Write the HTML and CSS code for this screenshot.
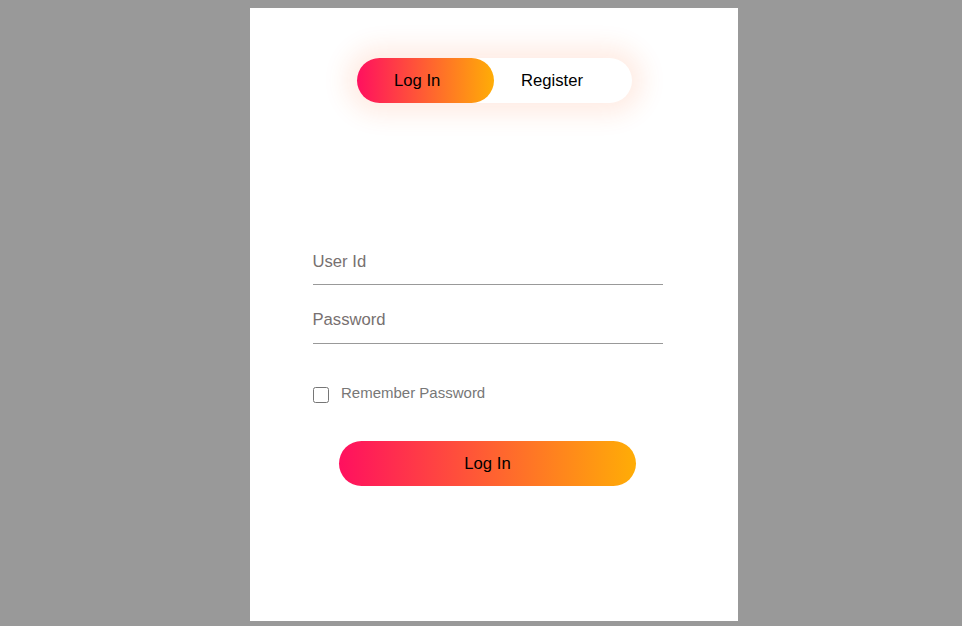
FILE: index.html
```html
<!DOCTYPE html>
<html>
<head>
<meta charset="utf-8">
<link rel="stylesheet" href="styles.css">
</head>
<body>
<div class="card">
  <div class="button-box">
    <button class="toggle-btn active" type="button">Log In</button>
    <button class="toggle-btn" type="button">Register</button>
  </div>
  <form class="input-group">
    <input class="input-field" type="text" placeholder="User Id">
    <input class="input-field" type="password" placeholder="Password">
    <label class="remember">
      <input class="check-box" type="checkbox">
      <span>Remember Password</span>
    </label>
    <button class="submit-btn" type="button">Log In</button>
  </form>
</div>
</body>
</html>
```

FILE: styles.css
```css
html, body {
  background: #999999;
}
body {
  margin: 8px;
  font-family: "Liberation Sans", Arial, sans-serif;
}
.card {
  box-sizing: border-box;
  width: 488px;
  height: 613px;
  margin-left: 242px;
  padding-top: 6.25px;
  background: #ffffff;
  overflow: hidden;
}
.button-box {
  display: flex;
  width: 275px;
  height: 45px;
  margin: 43.75px auto 0;
  border-radius: 37.5px;
  box-shadow: 0 0 25px 11.25px rgba(255, 97, 36, 0.12);
  background: #ffffff;
}
.toggle-btn {
  padding: 0 0 0 27px;
  border: 0;
  border-radius: 37.5px;
  background: transparent;
  font-family: "Liberation Sans", Arial, sans-serif;
  font-size: 16.67px;
  color: #000000;
  text-align: left;
  cursor: pointer;
}
.toggle-btn.active {
  width: 137.5px;
  padding-left: 37.5px;
  background: linear-gradient(to right, #ff105f, #ffad06);
}
.input-group {
  display: flex;
  flex-direction: column;
  width: 350px;
  margin: 130px 0 0 62.5px;
}
.input-field {
  box-sizing: content-box;
  width: 100%;
  padding: 12.5px 0;
  margin: 6.25px 0;
  border: 0;
  border-bottom: 1px solid #999999;
  outline: none;
  background: transparent;
  font-family: "Liberation Sans", Arial, sans-serif;
  font-size: 16.67px;
  color: #333333;
}
.input-field::placeholder {
  color: #777070;
}
.remember {
  display: flex;
  align-items: flex-start;
  margin: 34.5px 0 38.5px;
}
.check-box {
  width: 16px;
  height: 16px;
  margin: 2px 12.5px 0 0;
}
.remember span {
  font-size: 15px;
  color: #777777;
  line-height: 15px;
}
.submit-btn {
  width: 297.5px;
  height: 45px;
  margin: 0 auto;
  padding: 0 37.5px;
  border: 0;
  border-radius: 37.5px;
  background: linear-gradient(to right, #ff105f, #ffad06);
  font-family: "Liberation Sans", Arial, sans-serif;
  font-size: 16.67px;
  color: #000000;
  cursor: pointer;
}
```
